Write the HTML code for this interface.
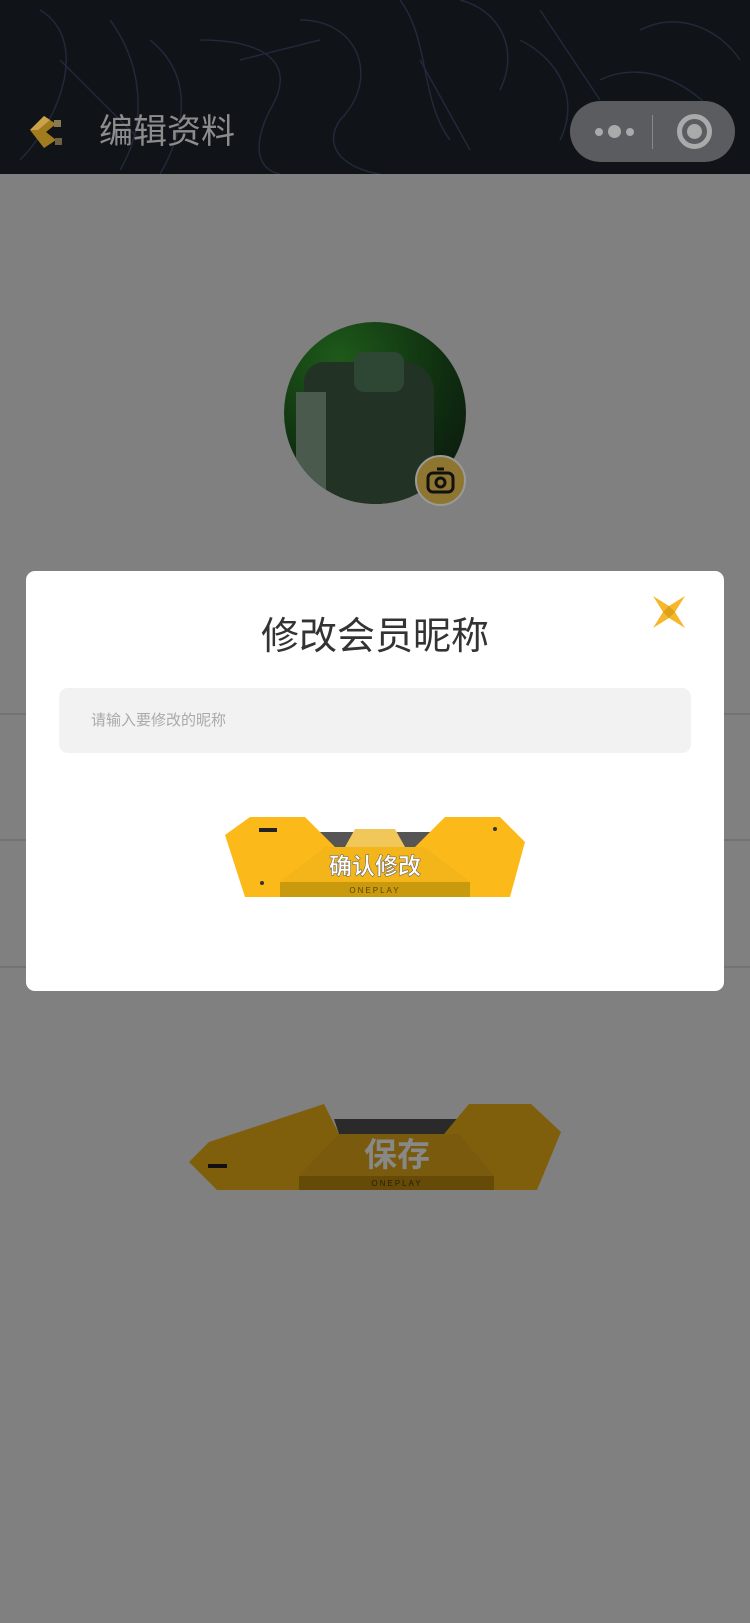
<!DOCTYPE html>
<html><head><meta charset="utf-8"><style>
*{margin:0;padding:0;box-sizing:border-box}
body{width:750px;height:1623px;background:#808080;position:relative;overflow:hidden;font-family:"Liberation Sans","Noto Sans CJK SC",sans-serif}
.hdr{position:absolute;left:0;top:0;width:750px;height:174px;background:#101318;overflow:hidden}
.title{position:absolute;left:99px;top:111px;font-size:34px;color:#8c8c8c;line-height:42px}
.cap{position:absolute;left:570px;top:101px;width:165px;height:61px;border-radius:31px;background:#5a5c60}
.div{position:absolute;left:0;width:750px;height:2px;background:#737373}
.modal{position:absolute;left:26px;top:571px;width:698px;height:420px;background:#fff;border-radius:9px}
.mt{position:absolute;left:0;width:100%;top:42px;text-align:center;font-size:38px;color:#333;line-height:48px}
.inp{position:absolute;left:33px;top:117px;width:632px;height:65px;background:#f2f2f2;border-radius:9px;font-size:15px;color:#aaa;line-height:65px;padding-left:32px}
</style></head><body>
<div class="hdr">
<svg width="750" height="174" style="position:absolute;left:0;top:0" fill="none" stroke="#23283a" stroke-width="1.5">
<path d="M40 10 C90 40 60 120 20 160 M110 20 C140 60 150 120 120 170 M150 40 C200 80 180 140 160 174 M200 40 C260 40 300 60 270 110 C250 150 260 170 280 174 M300 20 C360 20 380 80 340 120 C320 150 350 170 380 174 M400 0 C430 40 420 100 450 140 M460 0 C500 10 520 50 500 90 M520 40 C560 60 580 100 560 140 M600 80 C640 60 690 80 720 120 M640 30 C680 10 720 30 740 60"/>
<path d="M60 60 L140 140 M240 60 L320 40 M420 60 L470 150 M540 10 L600 100"/>
</svg>
<svg style="position:absolute;left:28px;top:114px" width="42" height="36" viewBox="0 0 42 36">
<polygon points="2,16 16,2 28,10 18,18 28,26 16,34" fill="#a07c1e"/>
<polygon points="2,16 16,2 22,6 10,16" fill="#c9a24a"/>
<rect x="26" y="6" width="7" height="7" fill="#8a7a50"/><rect x="27" y="24" width="7" height="7" fill="#6e6240"/>
</svg>
<div class="title">编辑资料</div>
<div class="cap">
<div style="position:absolute;left:25px;top:27px;width:8px;height:8px;border-radius:50%;background:#aaa"></div>
<div style="position:absolute;left:38px;top:24px;width:13px;height:13px;border-radius:50%;background:#aaa"></div>
<div style="position:absolute;left:56px;top:27px;width:8px;height:8px;border-radius:50%;background:#aaa"></div>
<div style="position:absolute;left:82px;top:14px;width:1px;height:34px;background:#888"></div>
<div style="position:absolute;left:107px;top:13px;width:35px;height:35px;border-radius:50%;border:5px solid #aaa"></div>
<div style="position:absolute;left:117px;top:23px;width:15px;height:15px;border-radius:50%;background:#aaa"></div>
</div>
</div>
<div style="position:absolute;left:284px;top:322px;width:182px;height:182px;border-radius:50%;background:radial-gradient(circle at 30% 20%,#1e5a1a,#0f2e10 55%,#0b120e);overflow:hidden">
<div style="position:absolute;left:20px;top:40px;width:130px;height:150px;background:#223326;border-radius:20px 30px 0 0"></div>
<div style="position:absolute;left:12px;top:70px;width:30px;height:100px;background:#4a5a4c"></div>
<div style="position:absolute;left:70px;top:30px;width:50px;height:40px;background:#2e4634;border-radius:10px"></div>
</div>
<div style="position:absolute;left:415px;top:455px;width:51px;height:51px;border-radius:50%;background:#8f7630;border:2px solid #9a9a9a"></div>
<svg style="position:absolute;left:425px;top:465px" width="31" height="31" viewBox="0 0 31 31" fill="none" stroke="#111" stroke-width="3"><rect x="3" y="8" width="25" height="19" rx="5"/><circle cx="15.5" cy="17.5" r="4.5"/><line x1="12" y1="4" x2="19" y2="4"/></svg>
<div class="div" style="top:713px"></div><div class="div" style="top:839px"></div><div class="div" style="top:966px"></div>
<div class="modal">
<div class="mt">修改会员昵称</div>
<svg style="position:absolute;left:626px;top:24px" width="34" height="34" viewBox="0 0 34 34"><polygon points="1,1 17,11 33,1 23,17 33,33 17,23 1,33 11,17" fill="#f6b72a"/><polygon points="11,17 17,11 23,17 17,23" fill="#e0a11a"/></svg>
<div class="inp">请输入要修改的昵称</div>
</div>
<svg style="position:absolute;left:225px;top:817px" width="300" height="80" viewBox="0 0 300 80">
<polygon points="90,15 210,15 200,30 100,30" fill="#555"/>
<polygon points="0,18 25,0 80,0 110,30 55,80 20,80" fill="#fbb91a"/>
<polygon points="300,25 275,0 220,0 190,30 245,80 285,80" fill="#fbb91a"/>
<polygon points="130,12 170,12 180,30 120,30" fill="#f1c75a"/>
<polygon points="100,30 200,30 245,65 55,65" fill="#f4b51a"/>
<rect x="55" y="65" width="190" height="15" fill="#c99a0e"/>
<rect x="34" y="11" width="18" height="4" fill="#222"/>
<circle cx="37" cy="66" r="2" fill="#333"/><circle cx="270" cy="12" r="2" fill="#333"/>
<text x="150" y="57" text-anchor="middle" font-family="Liberation Sans,Noto Sans CJK SC,sans-serif" font-weight="bold" font-size="23" fill="#fff" stroke="#555" stroke-width=".5">确认修改</text>
<text x="150" y="76" text-anchor="middle" font-family="Liberation Sans,sans-serif" font-size="8" letter-spacing="2" fill="#5a4300">ONEPLAY</text>
</svg>
<svg style="position:absolute;left:189px;top:1104px" width="372" height="86" viewBox="0 0 372 86">
<polygon points="145,15 280,15 270,30 150,30" fill="#2a2a2a"/>
<polygon points="0,58 20,38 135,0 150,30 110,86 28,86" fill="#7f5e0c"/>
<polygon points="372,28 342,0 280,0 255,30 305,86 348,86" fill="#7f5e0c"/>
<polygon points="150,30 270,30 305,72 110,72" fill="#7a5a0d"/>
<rect x="110" y="72" width="195" height="14" fill="#654a08"/>
<rect x="19" y="60" width="19" height="4" fill="#111"/>
<text x="208" y="62" text-anchor="middle" font-family="Liberation Sans,Noto Sans CJK SC,sans-serif" font-weight="bold" font-size="33" fill="#888">保存</text>
<text x="208" y="82" text-anchor="middle" font-family="Liberation Sans,sans-serif" font-size="8" letter-spacing="2" fill="#2a1f00">ONEPLAY</text>
</svg>
</body></html>
